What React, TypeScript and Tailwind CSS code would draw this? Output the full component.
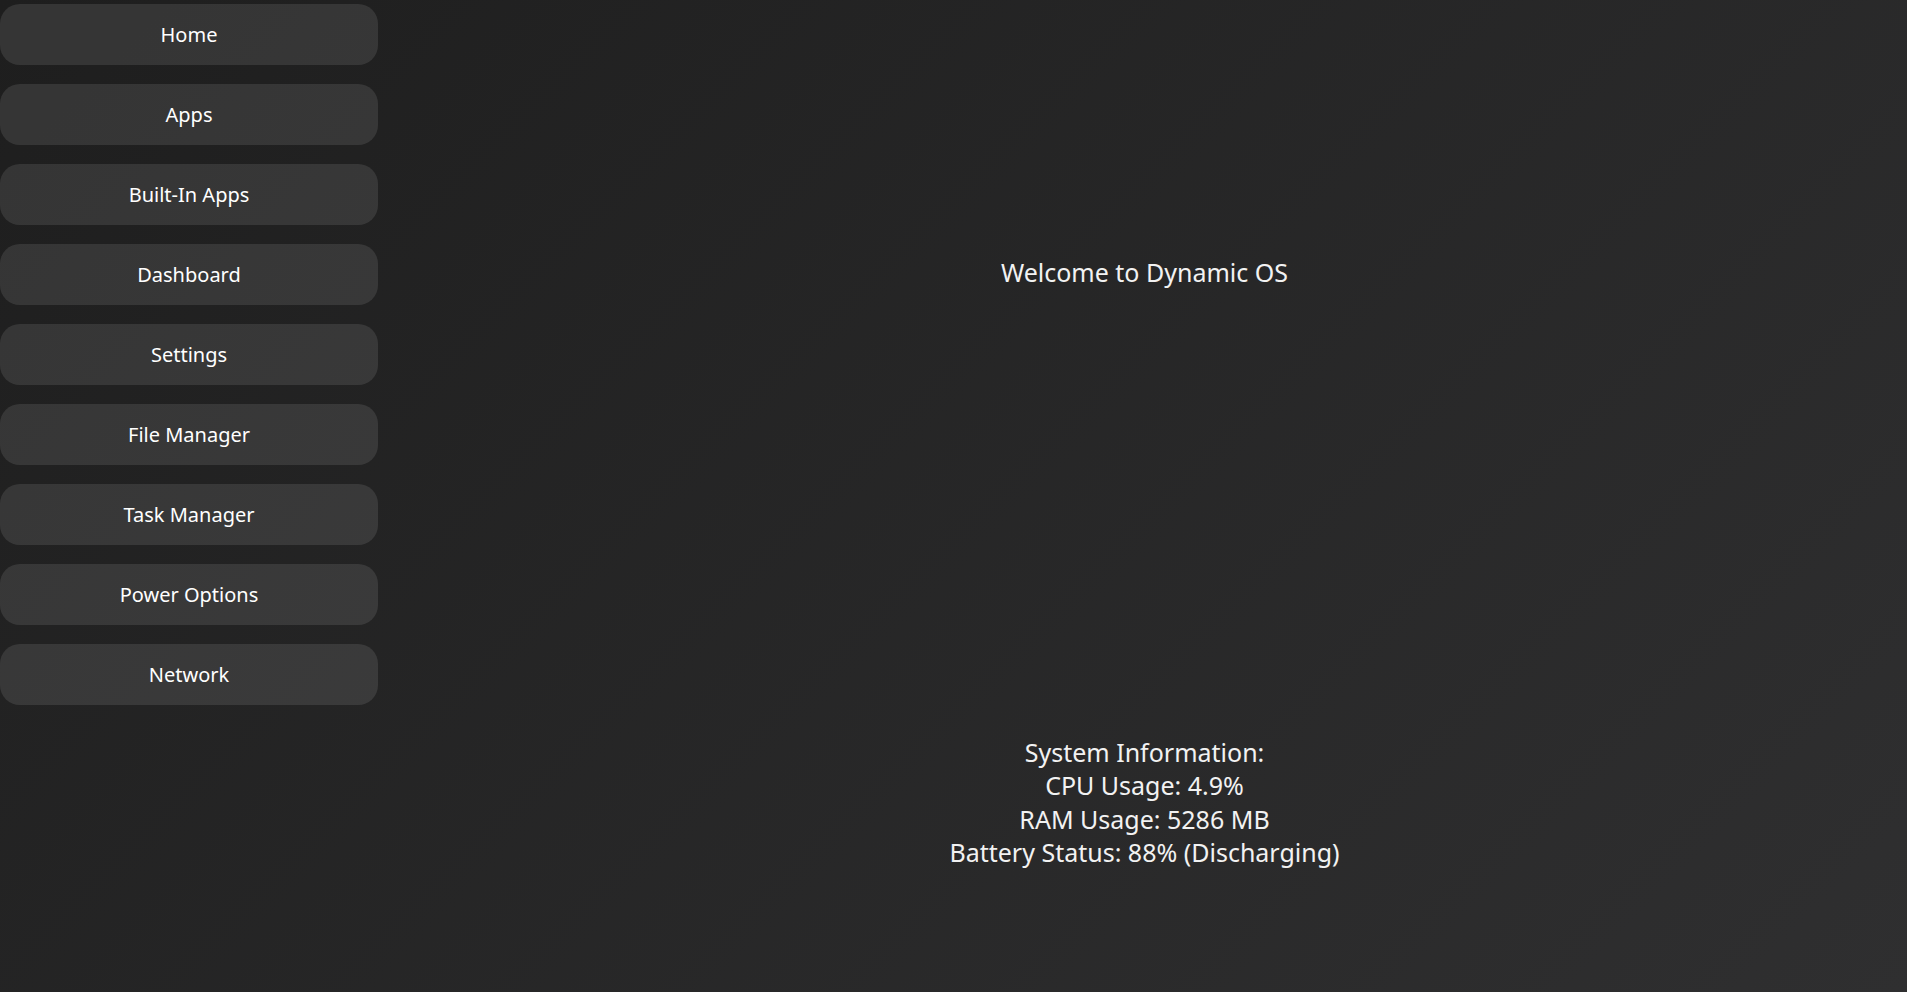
const navItems = [
  'Home',
  'Apps',
  'Built-In Apps',
  'Dashboard',
  'Settings',
  'File Manager',
  'Task Manager',
  'Power Options',
  'Network',
];

export default function App() {
  return (
    <div
      className="flex h-[992px] w-full overflow-hidden bg-[linear-gradient(135deg,#1e1e1e,#2f2f30)] text-[#f2f2f2]"
      style={{ fontFamily: '"Noto Sans", "Open Sans", sans-serif' }}
    >
      {/* Sidebar */}
      <nav className="flex w-[382px] shrink-0 flex-col gap-[19px] pt-[4px]">
        {navItems.map((item) => (
          <button
            key={item}
            type="button"
            className="h-[61px] w-[378px] rounded-[20px] bg-white/10 text-[20px] text-white"
          >
            {item}
          </button>
        ))}
      </nav>

      {/* Main content */}
      <main className="flex flex-1 flex-col items-center text-[25px] leading-[33.6px]">
        <h1 className="mt-[256px] font-normal">Welcome to Dynamic OS</h1>
        <div className="mt-[446px] flex flex-col items-center">
          <p>System Information:</p>
          <p>CPU Usage: 4.9%</p>
          <p>RAM Usage: 5286 MB</p>
          <p>Battery Status: 88% (Discharging)</p>
        </div>
      </main>
    </div>
  );
}
